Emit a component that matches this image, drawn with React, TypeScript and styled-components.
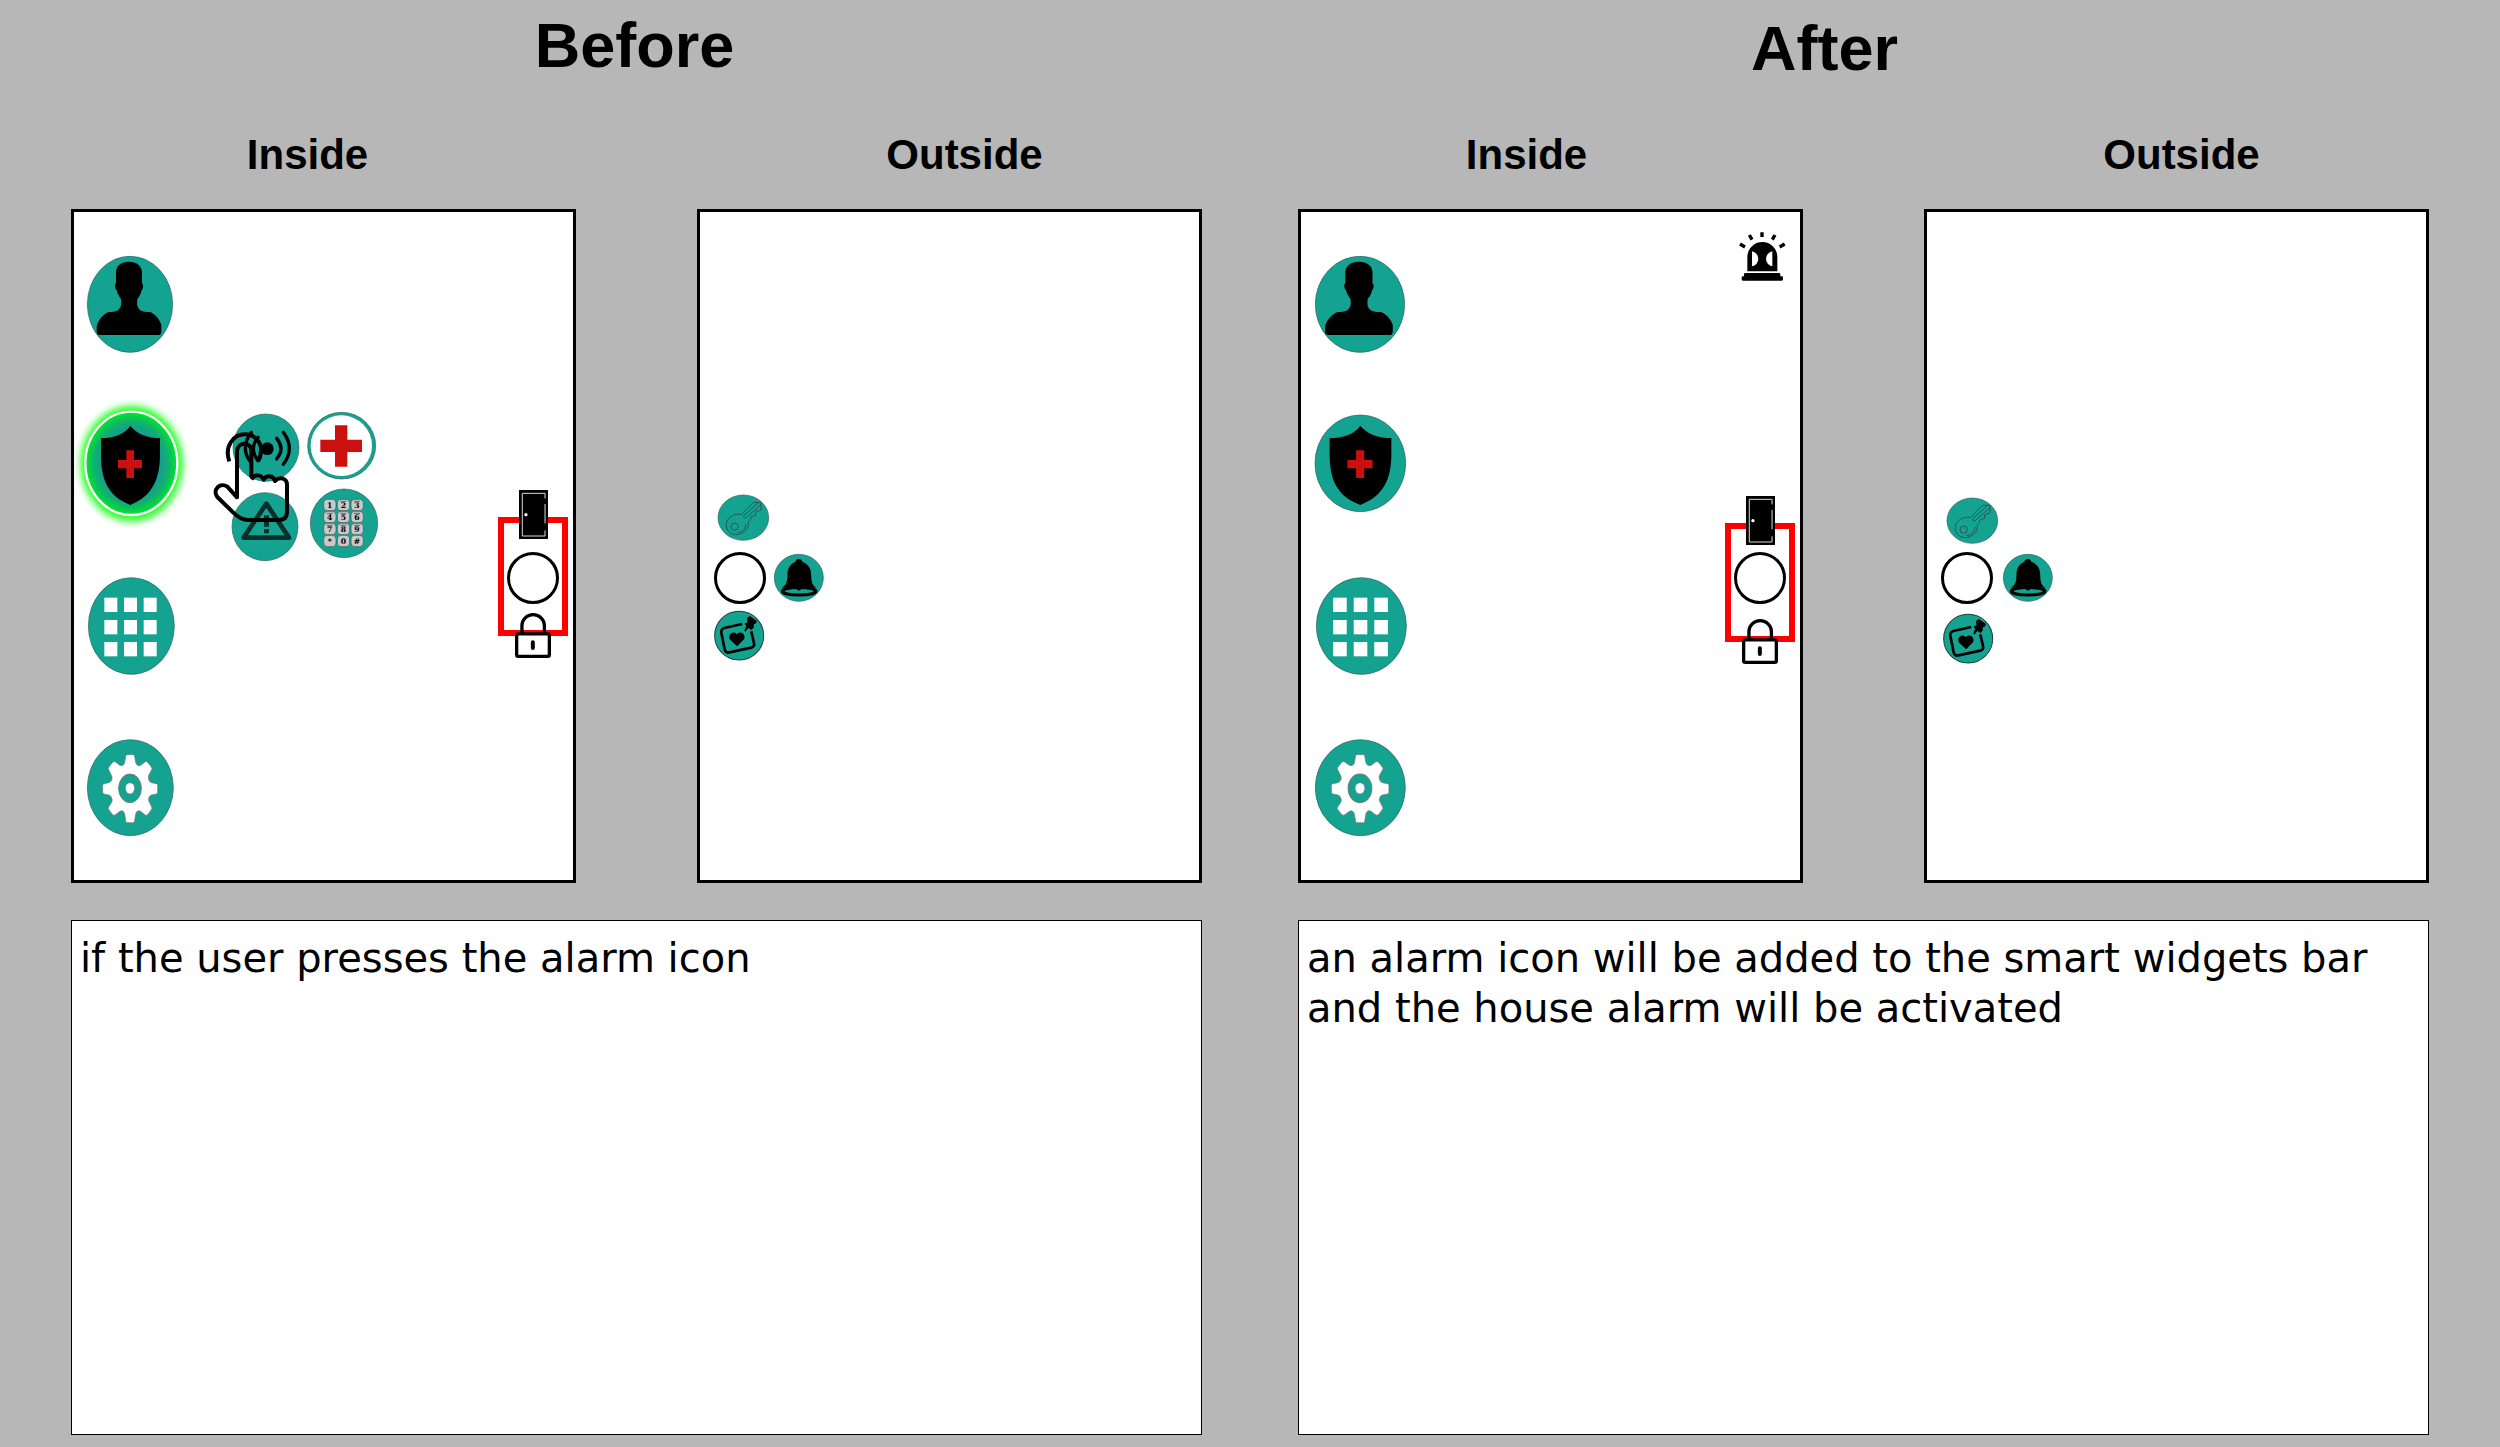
import React from "react";
import styled, { createGlobalStyle } from "styled-components";

const TEAL = "#14a391";
const RIM = "#2f5f5a";
const RED = "#cc1010";

const GlobalStyle = createGlobalStyle`
  *, *::before, *::after { box-sizing: border-box; }
  body { margin: 0; background: #b7b7b7; color: #000; }
`;

const Page = styled.main`
  display: grid;
  grid-template-columns: 1fr 1fr;
  gap: 96px;
  min-height: 100vh;
  padding: 0 71px 12px;
  font-family: "Liberation Sans", Arial, sans-serif;
`;

const Stage = styled.section`
  display: flex;
  flex-direction: column;
  min-width: 0;
`;

const Title = styled.h1<{ $top: number; $right: number }>`
  min-height: 131px;
  margin: 0;
  padding: ${(p) => p.$top}px ${(p) => p.$right}px 0 0;
  font-size: 63px;
  line-height: 72px;
  text-align: center;
`;

const Screens = styled.div`
  display: grid;
  grid-template-columns: 1fr 1fr;
  column-gap: 121px;
`;

const View = styled.div`
  display: flex;
  flex-direction: column;
`;

const ViewTitle = styled.h2<{ $left?: number; $right?: number }>`
  margin: 0 0 30px;
  padding: 0 ${(p) => p.$right ?? 0}px 0 ${(p) => p.$left ?? 0}px;
  font-size: 42px;
  line-height: 48px;
  text-align: center;
`;

const Screen = styled.div<{ $left: number }>`
  display: flex;
  flex: 1;
  align-items: flex-start;
  padding: 0 5px 0 ${(p) => p.$left}px;
  border: 3px solid #000;
  background: #fff;
`;

const IconButton = styled.button<{ $w: number; $h: number }>`
  display: block;
  flex: none;
  width: ${(p) => p.$w}px;
  height: ${(p) => p.$h}px;
  padding: 0;
  border: 0;
  background: none;
  cursor: pointer;
`;

const Art = styled.svg`
  display: block;
  width: 100%;
  height: 100%;
  overflow: visible;
`;

const Rail = styled.nav`
  display: flex;
  flex-direction: column;
  gap: 64px;
  padding: 44px 0;
`;

const Cluster = styled.div`
  position: relative;
  display: flex;
  gap: 9px;
  margin: 200px 0 0 58px;
`;

const ClusterColumn = styled.div<{ $top: number; $gap: number }>`
  display: flex;
  flex-direction: column;
  gap: ${(p) => p.$gap}px;
  padding-top: ${(p) => p.$top}px;
`;

const Pointer = styled.div`
  position: absolute;
  top: 16px;
  left: -19px;
  width: 77px;
  height: 95px;
  pointer-events: none;
`;

const Widgets = styled.aside`
  display: flex;
  flex-direction: column;
  align-items: center;
  width: 70px;
  margin-left: auto;
  padding-top: 20px;
`;

const StatusSlot = styled.div`
  width: 50px;
  height: 49px;
`;

const Lever = styled.div<{ $top: number }>`
  position: relative;
  display: flex;
  flex-direction: column;
  align-items: center;
  width: 100%;
  padding-top: ${(p) => p.$top}px;
`;

const LeverTrack = styled.div<{ $top: number }>`
  position: absolute;
  top: ${(p) => p.$top + 27}px;
  left: 0;
  width: 100%;
  height: 119px;
  border: 6px solid #f00;
`;

const Glyph = styled.div<{ $w: number; $h: number }>`
  position: relative;
  width: ${(p) => p.$w}px;
  height: ${(p) => p.$h}px;
`;

const Knob = styled.button<{ $above?: number; $below?: number }>`
  position: relative;
  flex: none;
  width: 52px;
  height: 52px;
  margin: ${(p) => p.$above ?? 0}px 0 ${(p) => p.$below ?? 0}px;
  padding: 0;
  border: 3px solid #000;
  border-radius: 50%;
  background: #fff;
  cursor: pointer;
`;

const Dial = styled.div<{ $top: number }>`
  display: flex;
  flex-direction: column;
  padding-top: ${(p) => p.$top}px;
`;

const DialRow = styled.div<{ $left?: number; $above?: number; $gap?: number }>`
  display: flex;
  align-items: center;
  gap: ${(p) => p.$gap ?? 0}px;
  padding: ${(p) => p.$above ?? 0}px 0 0 ${(p) => p.$left ?? 0}px;
`;

const Note = styled.p`
  flex: 1;
  margin: 37px 0 0;
  padding: 12px 8px;
  border: 1px solid #000;
  background: #fff;
  font-family: "DejaVu Sans", Verdana, sans-serif;
  font-size: 40px;
  line-height: 50px;
`;

const Drawing = ({ box, children }: { box: string; children: React.ReactNode }) => (
  <Art viewBox={box} preserveAspectRatio="none" aria-hidden="true">
    {children}
  </Art>
);

const Disc = ({ cx, cy, rx, ry }: { cx: number; cy: number; rx: number; ry: number }) => (
  <ellipse cx={cx} cy={cy} rx={rx} ry={ry} fill={TEAL} stroke={RIM} strokeWidth={2} />
);

const UserArt = () => (
  <Drawing box="81 165 261 291">
    <Disc cx={210} cy={310} rx={128} ry={144} />
    <path d="M207 182C180 182 167 198 168 216V247C163 250 164 262 170 268C172 278 178 288 183 294C184 308 185 318 174 328C164 333 156 333 146 333C128 340 110 362 110 380V392Q110 402 122 402H294Q304 402 304 392V372C299 354 284 338 270 333C254 333 246 333 238 325C230 316 231 306 232 294C240 285 243 276 245 268C250 262 251 250 246 247V216C247 198 234 182 207 182Z" />
  </Drawing>
);

const ShieldArt = ({ active }: { active: boolean }) => (
  <Drawing box="81 648 261 291">
    {active && (
      <defs>
        <radialGradient id="shieldFill">
          <stop offset="0.6" stopColor="#149a98" />
          <stop offset="0.8" stopColor="#10b070" />
          <stop offset="1" stopColor="#00e828" />
        </radialGradient>
        <filter id="shieldGlow" x="-30%" y="-30%" width="160%" height="160%">
          <feGaussianBlur stdDeviation="11" />
        </filter>
      </defs>
    )}
    {active && <ellipse cx={215} cy={788} rx={154} ry={174} fill="#2bff2b" filter="url(#shieldGlow)" />}
    {active ? (
      <ellipse cx={214} cy={787} rx={138} ry={155} fill="url(#shieldFill)" stroke="#fff" strokeWidth={7} />
    ) : (
      <Disc cx={211} cy={787} rx={130} ry={145} />
    )}
    <path d="M211 674C230 700 265 711 300 711V760C300 830 280 885 211 912C140 885 123 830 123 760V711C160 711 195 700 211 674Z" />
    <path d="M199 748h23v29h24v25h-24v29h-23v-29h-25v-25h25z" fill={RED} />
  </Drawing>
);

const AppsArt = () => (
  <Drawing box="81 111 261 291">
    <Disc cx={214} cy={255} rx={129} ry={145} />
    {[170, 237, 303].map((y) =>
      [133, 192, 251].map((x) => <rect key={`${x}-${y}`} x={x} y={y} width={39} height={43} fill="#fff" />)
    )}
  </Drawing>
);

const GearArt = () => (
  <Drawing box="81 597 261 291">
    <Disc cx={211} cy={743} rx={129} ry={144} />
    <path
      fill="#fff"
      stroke="#777"
      strokeWidth={2}
      strokeLinejoin="round"
      d="M201 644H220Q224 644 224 650L227 668Q229 676 237 677Q243 677 248 671L256 665Q260 663 264 668L274 681Q277 685 275 689L266 706Q264 712 266 718Q267 726 274 728L289 731Q293 732 293 736V757Q293 761 289 762L274 765Q267 767 266 776Q265 782 268 787L275 801Q277 805 274 809L264 823Q260 827 256 825L248 819Q241 811 235 812Q228 814 227 822L224 841Q224 848 220 848H201Q197 848 197 841L194 822Q193 814 186 812Q180 812 173 819L165 825Q161 827 157 823L147 810Q143 805 146 801L155 787Q158 780 155 774Q153 767 147 765L132 762Q128 761 128 757V736Q128 732 132 731L147 728Q154 726 156 717Q157 711 154 706L146 689Q144 685 147 681L157 668Q161 663 165 665L173 671Q179 677 185 677Q192 676 194 668L197 650Q197 644 201 644Z"
    />
    <ellipse cx={210} cy={745} rx={34} ry={43} fill={TEAL} stroke="#777" strokeWidth={3} />
    <ellipse cx={210} cy={745} rx={14} ry={17} fill="#fff" stroke="#777" strokeWidth={2} />
  </Drawing>
);

const AlarmArt = () => (
  <Drawing box="96 72 201 204">
    <Disc cx={198} cy={173} rx={99} ry={101} />
    <circle cx={202} cy={176} r={19} />
    <g fill="none" stroke="#000" strokeWidth={10} strokeLinecap="round">
      <path d="M230 145Q256 176 230 207M250 127Q286 176 250 223" />
      <path d="M174 142Q146 176 174 212M154 127Q118 176 154 219" />
    </g>
  </Drawing>
);

const FirstAidArt = () => (
  <Drawing box="324 66 210 204">
    <Disc cx={425} cy={167} rx={102} ry={100} />
    <ellipse cx={424} cy={167} rx={92} ry={91} fill="#fff" />
    <path d="M405 106h37v43h44v37h-44v44h-37v-44h-44v-37h44z" fill={RED} />
  </Drawing>
);

const WarningArt = () => (
  <Drawing box="96 309 201 204">
    <Disc cx={195} cy={410} rx={99} ry={102} />
    <path d="M199 341L267 443H131Z" fill="none" stroke="#07302c" strokeWidth={14} strokeLinejoin="round" />
    <path d="M192 376h15v34h-15zM192 417h15v13h-15z" fill="#07302c" />
  </Drawing>
);

const KEYS = ["1", "2", "3", "4", "5", "6", "7", "8", "9", "*", "0", "#"];

const KeypadArt = () => (
  <Drawing box="324 297 210 204">
    <Disc cx={432} cy={400} rx={101} ry={103} />
    {KEYS.map((key, i) => {
      const x = 371 + (i % 3) * 41;
      const y = 328 + Math.floor(i / 3) * 36;
      return (
        <g key={key}>
          <rect x={x} y={y} width={37} height={34} rx={11} fill="#c9c9c9" stroke="#3d5552" strokeWidth={2} />
          {i > 0 && i < 9 && <path d={`M${x + 9} ${y + 6}h18`} stroke="#666" strokeWidth={3} />}
          <text
            x={x + 18}
            y={y + 27}
            textAnchor="middle"
            fontFamily="'DejaVu Serif', serif"
            fontWeight={700}
            fontSize={23}
          >
            {key}
          </text>
        </g>
      );
    })}
  </Drawing>
);

const HandArt = () => (
  <Drawing box="39 114 231 285">
    <g fill="none" stroke="#000" strokeWidth={12} strokeLinejoin="round">
      <path d="M88 214C72 170 100 132 136 133C164 134 184 156 183 180C183 194 180 204 174 214" />
      <path d="M154 262V182C154 154 111 154 111 186V322L82 290C60 275 36 300 52 321L100 368Q122 390 144 390H236Q260 390 261 368V284C261 266 240 258 225 273C220 256 198 254 191 269C184 252 164 252 154 268" />
    </g>
  </Drawing>
);

const DoorArt = () => (
  <Drawing box="118 60 88 147">
    <rect x={118} y={60} width={88} height={147} />
    <path d="M197 85V70H128V198H197V181M197 102V160" fill="none" stroke="#ddd" strokeWidth={3} />
    <circle cx={139} cy={134} r={5} fill="#fff" />
  </Drawing>
);

const LockArt = () => (
  <Drawing box="103 428 109 136">
    <path d="M124 490V466A34 33 0 0 1 192 466V490" fill="none" stroke="#000" strokeWidth={10} />
    <rect x={108} y={491} width={99} height={68} rx={5} fill="#fff" stroke="#000" strokeWidth={10} />
    <path d="M157 516V534" stroke="#000" strokeWidth={12} strokeLinecap="round" />
  </Drawing>
);

const SirenArt = () => (
  <Drawing box="107 95 150 147">
    <path d="M144 213V170A45 45 0 0 1 234 170V213Z" />
    <path d="M158 153A24 23 0 0 1 158 198ZM219 153A24 23 0 0 0 219 198Z" fill="#fff" />
    <path d="M138 218H239Q243 218 243 222V228H247Q251 228 251 232V237Q251 241 247 241H131Q127 241 127 237V232Q127 228 131 228H134V222Q134 218 138 218Z" />
    <path d="M188 96V110M150 104L158 118M227 104L219 118M122 131L137 140M256 131L241 140" stroke="#000" strokeWidth={10} />
  </Drawing>
);

const KeyArt = () => (
  <Drawing box="84 75 153 138">
    <Disc cx={160} cy={143} rx={76} ry={68} />
    <g fill="none" stroke="#2a5752" strokeWidth={3} strokeLinejoin="round">
      <path d="M155 133C128 130 106 146 109 168C112 194 142 201 162 186C174 176 177 166 174 156L182 149V141L197 136V125L213 120V97H190Z" />
      <circle cx={134} cy={170} r={11} />
      <path d="M160 138L205 98M168 143L213 104M160 138Q162 146 168 143M142 188Q166 186 168 162" />
    </g>
  </Drawing>
);

const BellArt = () => (
  <Drawing box="253 249 149 143">
    <Disc cx={327} cy={320} rx={73} ry={70} />
    <path d="M327 264Q318 264 317 272C299 279 293 294 293 312C293 334 288 342 276 350Q300 344 327 350Q356 344 380 350C368 342 364 334 364 312C364 294 356 279 337 272Q336 264 327 264Z" />
    <ellipse cx={328} cy={360} rx={50} ry={11} fill="none" stroke="#000" strokeWidth={9} />
    <circle cx={327} cy={351} r={7} />
  </Drawing>
);

const NoteArt = () => (
  <Drawing box="72 423 149 147">
    <circle cx={147} cy={497} r={73} fill={TEAL} stroke="#1c3f3b" strokeWidth={3} />
    <path d="M156 462L103 474Q92 477 94 489L104 539Q107 550 118 547L183 533Q194 530 191 518L183 484" fill="none" stroke="#000" strokeWidth={8} />
    <path d="M141 529L120 509C111 494 130 480 140 493C149 480 168 491 162 507Z" />
    <path d="M170 444L179 438L200 453L196 461L191 462L190 473L184 480L174 474L166 485L162 482L168 468L163 461L172 457Z" />
  </Drawing>
);

type Layout = {
  name: string;
  note: string;
  title: { top: number; right: number };
  insideRight: number;
  outsideLeft: number;
  railLeft: number;
  railWidth: number;
  leverTop: number;
  leverAbove: number;
  leverBelow: number;
  dialTop: number;
  keyLeft: number;
  knobAbove: number;
  bellGap: number;
  noteLeft: number;
  noteAbove: number;
  pressed: boolean;
};

const STAGES: Layout[] = [
  {
    name: "Before",
    note: "if the user presses the alarm icon",
    title: { top: 9, right: 4 },
    insideRight: 32,
    outsideLeft: 30,
    railLeft: 13,
    railWidth: 87,
    leverTop: 209,
    leverAbove: 13,
    leverBelow: 9,
    dialTop: 283,
    keyLeft: 4,
    knobAbove: 11,
    bellGap: 8,
    noteLeft: 0,
    noteAbove: 7,
    pressed: true,
  },
  {
    name: "After",
    note: "an alarm icon will be added to the smart widgets bar and the house alarm will be activated",
    title: { top: 12, right: 78 },
    insideRight: 48,
    outsideLeft: 10,
    railLeft: 14,
    railWidth: 91,
    leverTop: 215,
    leverAbove: 7,
    leverBelow: 15,
    dialTop: 286,
    keyLeft: 6,
    knobAbove: 8,
    bellGap: 10,
    noteLeft: 2,
    noteAbove: 10,
    pressed: false,
  },
];

const InsideScreen = ({ s }: { s: Layout }) => (
  <Screen $left={s.railLeft}>
    <Rail aria-label="Main menu">
      <IconButton $w={s.railWidth} $h={97} aria-label="Profile"><UserArt /></IconButton>
      <IconButton $w={s.railWidth} $h={97} aria-label="Safety"><ShieldArt active={s.pressed} /></IconButton>
      <IconButton $w={s.railWidth} $h={97} aria-label="Apps"><AppsArt /></IconButton>
      <IconButton $w={s.railWidth} $h={97} aria-label="Settings"><GearArt /></IconButton>
    </Rail>
    {s.pressed && (
      <Cluster>
        <ClusterColumn $top={2} $gap={11}>
          <IconButton $w={67} $h={68} aria-label="Alarm"><AlarmArt /></IconButton>
          <IconButton $w={67} $h={68} aria-label="Warning"><WarningArt /></IconButton>
        </ClusterColumn>
        <ClusterColumn $top={0} $gap={9}>
          <IconButton $w={70} $h={68} aria-label="First aid"><FirstAidArt /></IconButton>
          <IconButton $w={70} $h={68} aria-label="Keypad"><KeypadArt /></IconButton>
        </ClusterColumn>
        <Pointer><HandArt /></Pointer>
      </Cluster>
    )}
    <Widgets>
      <StatusSlot>{!s.pressed && <SirenArt />}</StatusSlot>
      <Lever $top={s.leverTop}>
        <LeverTrack $top={s.leverTop} />
        <Glyph $w={29} $h={49}><DoorArt /></Glyph>
        <Knob $above={s.leverAbove} $below={s.leverBelow} aria-label="Door handle" />
        <Glyph $w={36} $h={45}><LockArt /></Glyph>
      </Lever>
    </Widgets>
  </Screen>
);

const OutsideScreen = ({ s }: { s: Layout }) => (
  <Screen $left={14}>
    <Dial $top={s.dialTop}>
      <DialRow $left={s.keyLeft}>
        <IconButton $w={51} $h={46} aria-label="Key"><KeyArt /></IconButton>
      </DialRow>
      <DialRow $above={s.knobAbove} $gap={s.bellGap}>
        <Knob aria-label="Door handle" />
        <IconButton $w={50} $h={48} aria-label="Bell"><BellArt /></IconButton>
      </DialRow>
      <DialRow $left={s.noteLeft} $above={s.noteAbove}>
        <IconButton $w={50} $h={49} aria-label="Leave a note"><NoteArt /></IconButton>
      </DialRow>
    </Dial>
  </Screen>
);

export default function App() {
  return (
    <>
      <GlobalStyle />
      <Page>
        {STAGES.map((s) => (
          <Stage key={s.name}>
            <Title $top={s.title.top} $right={s.title.right}>{s.name}</Title>
            <Screens>
              <View>
                <ViewTitle $right={s.insideRight}>Inside</ViewTitle>
                <InsideScreen s={s} />
              </View>
              <View>
                <ViewTitle $left={s.outsideLeft}>Outside</ViewTitle>
                <OutsideScreen s={s} />
              </View>
            </Screens>
            <Note>{s.note}</Note>
          </Stage>
        ))}
      </Page>
    </>
  );
}
